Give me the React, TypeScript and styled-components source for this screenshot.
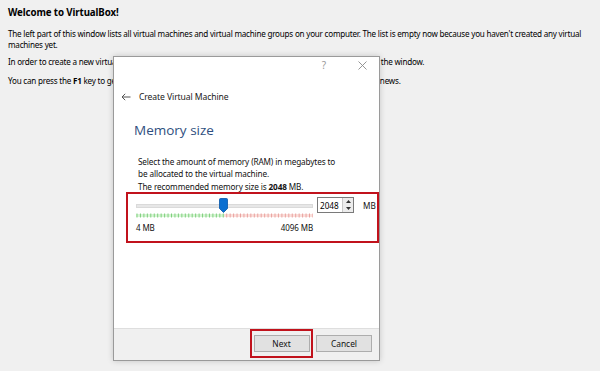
import React from "react";
import styled, { createGlobalStyle } from "styled-components";

const GlobalStyle = createGlobalStyle`
  html, body { margin: 0; padding: 0; }
  body {
    background: #f0f0f0;
    font-family: "Noto Sans", "DejaVu Sans", sans-serif;
    color: #000;
    width: 600px;
    height: 371px;
    overflow: hidden;
  }
`;

const Page = styled.div`
  position: relative;
  width: 600px;
  height: 371px;
  box-sizing: border-box;
  padding: 6px 4px 0 8px;
  font-size: 8.1px;
  letter-spacing: -0.22px;
  line-height: 11px;
`;

const Heading = styled.h1`
  margin: 0 0 8px 0;
  font-size: 9.7px;
  letter-spacing: -0.1px;
  font-weight: 700;
  line-height: 14px;
`;

const Para = styled.p<{ $gap?: number }>`
  margin: 0 0 ${(p) => p.$gap ?? 8}px 0;
`;

const Dialog = styled.div`
  position: absolute;
  left: 113px;
  top: 56px;
  width: 267px;
  height: 305px;
  box-sizing: border-box;
  background: #fff;
  border: 1px solid #9a9a9a;
  box-shadow: 0 0 6px rgba(0, 0, 0, 0.18);
  display: flex;
  flex-direction: column;
  letter-spacing: 0;
`;

const TitleBar = styled.div`
  height: 17px;
  display: flex;
  justify-content: flex-end;
  align-items: center;
  padding-right: 12px;
  gap: 28px;
  color: #9a9a9a;
  font-size: 10px;
`;

const TitleGlyph = styled.span`
  display: flex;
  align-items: center;
  justify-content: center;
  width: 10px;
`;

const Header = styled.div`
  display: flex;
  align-items: center;
  gap: 8px;
  padding: 15px 0 0 7px;
  height: 16px;
  font-size: 8.6px;
  letter-spacing: -0.1px;
  color: #1a1a1a;
`;

const Body = styled.div`
  flex: 1;
  padding: 16px 0 0 20px;
`;

const PageTitle = styled.div`
  font-family: "Open Sans", "Noto Sans", sans-serif;
  font-size: 13.5px;
  color: #2f4f80;
  line-height: 18px;
`;

const Desc = styled.div`
  margin: 17px 0 0 4px;
  font-size: 8.2px;
  letter-spacing: -0.12px;
  line-height: 12px;
  color: #111;
  width: 205px;
`;

const Rec = styled.div`
  margin: 1px 0 0 4px;
  font-size: 8.2px;
  letter-spacing: -0.12px;
  line-height: 11px;
  color: #111;
`;

const Highlight = styled.div`
  margin: 0 0 0 -8px;
  width: 253px;
  height: 51px;
  box-sizing: border-box;
  border: 2px solid #c1121c;
  padding: 4px 0 0 8px;
`;

const SliderRow = styled.div`
  display: flex;
  align-items: flex-start;
`;

const SliderCol = styled.div`
  width: 177px;
  display: flex;
  flex-direction: column;
`;

const Track = styled.div`
  position: relative;
  height: 15px;
  display: flex;
  align-items: center;
`;

const Groove = styled.div`
  width: 100%;
  height: 4px;
  background: #e7e7e7;
  border: 1px solid #dadada;
  box-sizing: border-box;
`;

const Thumb = styled.svg`
  position: absolute;
  left: 83px;
  top: 0;
`;

const Ticks = styled.svg`
  display: block;
`;

const Labels = styled.div`
  display: flex;
  justify-content: space-between;
  margin-top: 4px;
  font-size: 8px;
  letter-spacing: -0.1px;
  line-height: 11px;
  color: #111;
`;

const Spin = styled.div`
  margin: -1px 0 0 4px;
  width: 37px;
  height: 16px;
  box-sizing: border-box;
  border: 1px solid #7a7a7a;
  background: #fff;
  display: flex;
  align-items: stretch;
  font-size: 8.2px;
`;

const SpinText = styled.div`
  flex: 1;
  display: flex;
  align-items: center;
  padding-left: 2px;
`;

const SpinButtons = styled.div`
  width: 10px;
  display: flex;
  flex-direction: column;
  border-left: 1px solid #c8c8c8;
  background: #ececec;
`;

const SpinBtn = styled.div`
  flex: 1;
  display: flex;
  align-items: center;
  justify-content: center;
`;

const Unit = styled.div`
  margin: 2px 0 0 9px;
  font-size: 8.2px;
  color: #111;
`;

const Footer = styled.div`
  height: 32px;
  box-sizing: border-box;
  background: #f0f0f0;
  border-top: 1px solid #dedede;
  display: flex;
  align-items: flex-start;
  justify-content: flex-end;
  padding: 0 7px 0 0;
`;

const NextFrame = styled.div`
  width: 63px;
  height: 29px;
  box-sizing: border-box;
  border: 2px solid #c1121c;
  display: flex;
  align-items: center;
  justify-content: center;
  margin-right: 3px;
`;

const Button = styled.div`
  width: 56px;
  height: 17px;
  box-sizing: border-box;
  background: #e1e1e1;
  border: 1px solid #adadad;
  display: flex;
  align-items: center;
  justify-content: center;
  font-size: 8.4px;
  color: #111;
`;

const CancelButton = styled(Button)`
  margin-top: 6px;
`;

function TickMarks() {
  const w = 177;
  const split = 88;
  const marks: React.ReactNode[] = [];
  for (let x = 1; x < w; x += 3.45) {
    marks.push(
      <line
        key={x}
        x1={x}
        x2={x}
        y1={0.5}
        y2={4.5}
        stroke={x < split ? "#7fcf7f" : "#e9a3a0"}
        strokeWidth={1}
      />
    );
  }
  return (
    <Ticks width={w} height={5} viewBox={`0 0 ${w} 5`}>
      <rect x={0} y={1} width={split} height={3} fill="#d9f5d6" />
      <rect x={split} y={1} width={w - split} height={3} fill="#fbe0dc" />
      {marks}
    </Ticks>
  );
}

export default function App() {
  return (
    <>
      <GlobalStyle />
      <Page>
        <Heading>Welcome to VirtualBox!</Heading>
        <Para $gap={6}>
          The left part of this window lists all virtual machines and virtual machine groups on your
          computer. The list is empty now because you haven't created any virtual machines yet.
        </Para>
        <Para $gap={8}>
          In order to create a new virtual machine, press the New button in the main tool bar located at
          the top of the window.
        </Para>
        <Para>
          You can press the <b>F1</b> key to get instant help, or visit www.virtualbox.org for more
          information and latest news.
        </Para>

        <Dialog>
          <TitleBar>
            <TitleGlyph>?</TitleGlyph>
            <TitleGlyph>
              <svg width="9" height="9" viewBox="0 0 9 9">
                <path d="M0.5 0.5 L8.5 8.5 M8.5 0.5 L0.5 8.5" stroke="#8a8a8a" strokeWidth="0.9" />
              </svg>
            </TitleGlyph>
          </TitleBar>
          <Header>
            <svg width="10" height="8" viewBox="0 0 10 8">
              <path d="M9.5 4 H1 M4.2 0.8 L1 4 L4.2 7.2" stroke="#555" strokeWidth="1" fill="none" />
            </svg>
            <span>Create Virtual Machine</span>
          </Header>
          <Body>
            <PageTitle>Memory size</PageTitle>
            <Desc>
              Select the amount of memory (RAM) in megabytes to be allocated to the virtual machine.
            </Desc>
            <Rec>
              The recommended memory size is <b>2048</b> MB.
            </Rec>
            <Highlight>
              <SliderRow>
                <SliderCol>
                  <Track>
                    <Groove />
                    <Thumb width="9" height="15" viewBox="0 0 9 15">
                      <path d="M0.5 1.5 Q0.5 0.5 1.5 0.5 H7.5 Q8.5 0.5 8.5 1.5 V10.5 L4.5 14.5 L0.5 10.5 Z" fill="#0a6fd1" stroke="#0556a8" strokeWidth="0.8" />
                    </Thumb>
                  </Track>
                  <TickMarks />
                  <Labels>
                    <span>4 MB</span>
                    <span>4096 MB</span>
                  </Labels>
                </SliderCol>
                <Spin>
                  <SpinText>2048</SpinText>
                  <SpinButtons>
                    <SpinBtn>
                      <svg width="5" height="3" viewBox="0 0 5 3"><path d="M0 3 L2.5 0 L5 3 Z" fill="#333" /></svg>
                    </SpinBtn>
                    <SpinBtn>
                      <svg width="5" height="3" viewBox="0 0 5 3"><path d="M0 0 L2.5 3 L5 0 Z" fill="#333" /></svg>
                    </SpinBtn>
                  </SpinButtons>
                </Spin>
                <Unit>MB</Unit>
              </SliderRow>
            </Highlight>
          </Body>
          <Footer>
            <NextFrame>
              <Button>Next</Button>
            </NextFrame>
            <CancelButton>Cancel</CancelButton>
          </Footer>
        </Dialog>
      </Page>
    </>
  );
}
